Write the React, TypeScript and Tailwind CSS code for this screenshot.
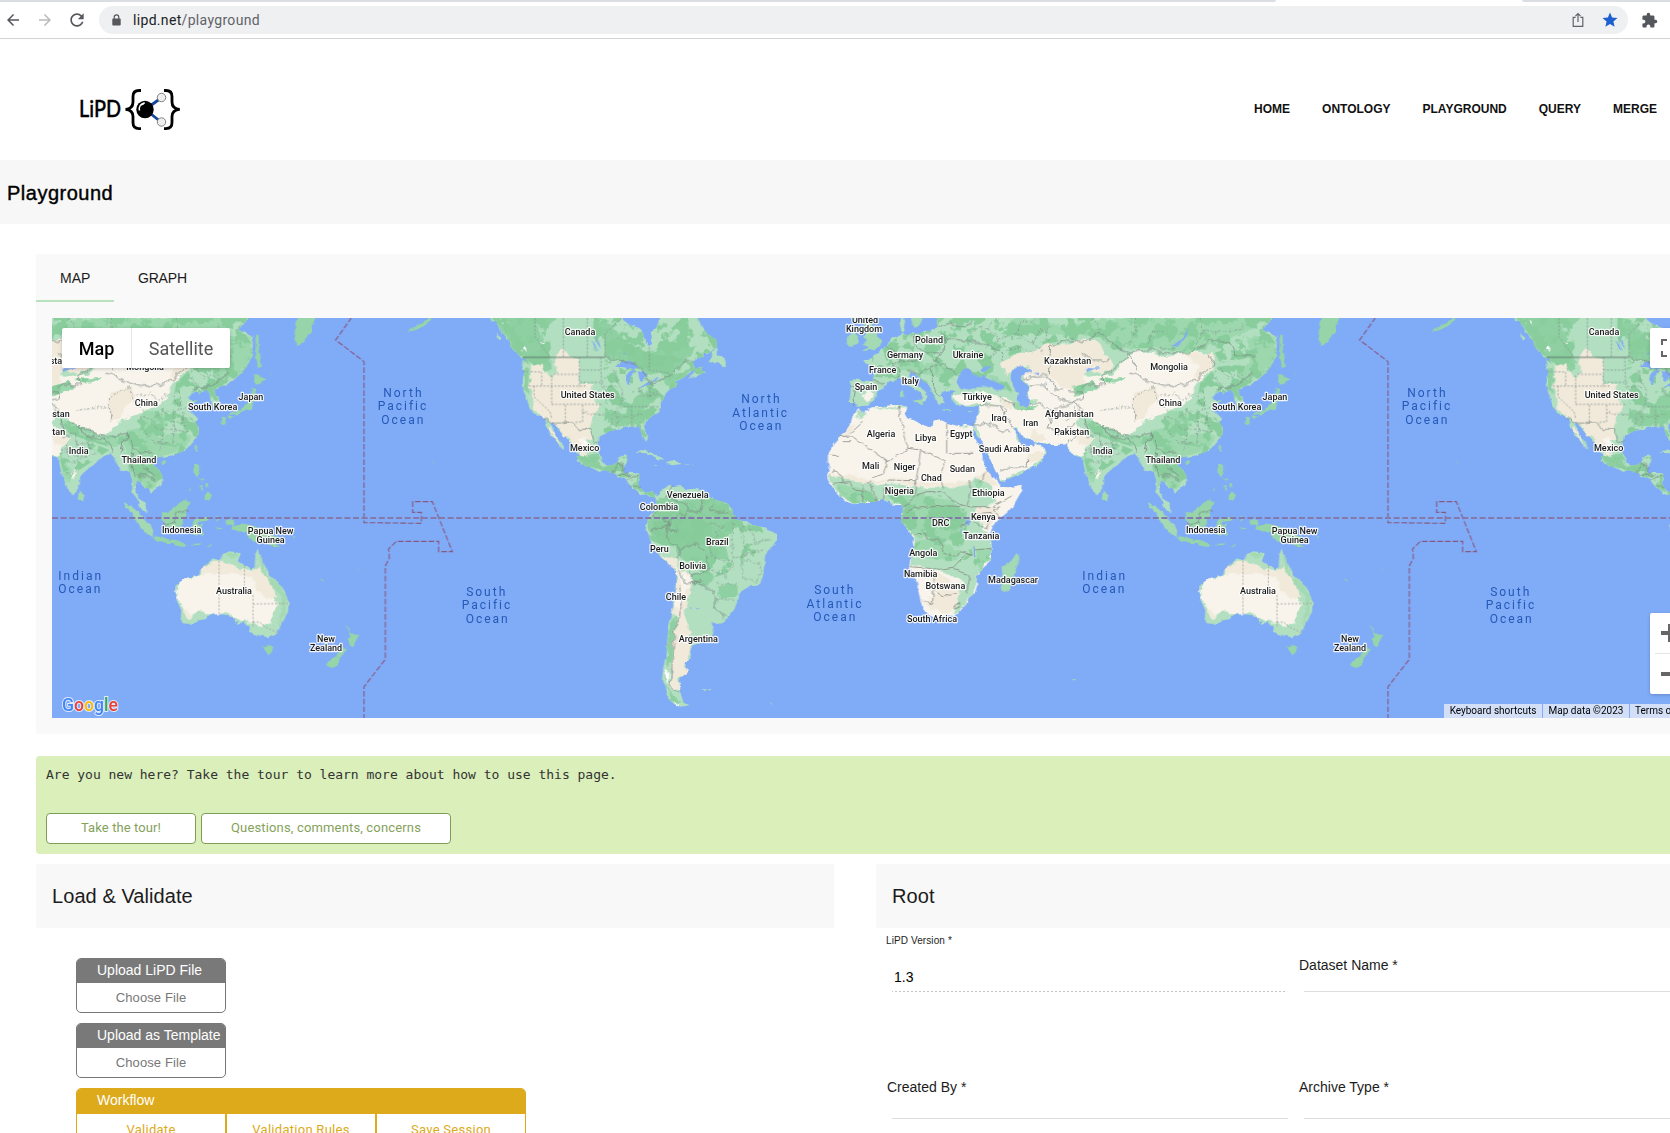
import React from "react";

const WORLD = 1024;

const ASIA = 1050;
const AMERICA = -1050;

const EURASIA =
  "M410 0 L412 30 408 52 395 62 372 66 350 72 335 70 320 77 310 70 303 62 300 45 303 28 312 24 316 36 312 50 314 62 300 75 285 80 268 90 262 108 245 118 235 130 222 134 216 142 205 150 190 150 196 160 212 165 219 180 222 198 215 214 185 211 160 208 149 214 153 230 150 258 148 278 165 280 172 291 185 288 205 287 216 276 228 258 232 246 248 236 256 224 262 216 278 217 290 208 300 202 318 212 326 224 340 236 352 242 362 250 368 262 366 278 374 272 382 262 376 252 380 246 362 234 350 224 340 210 328 200 330 188 345 188 352 198 366 210 385 222 392 236 398 248 404 262 410 280 420 286 424 276 434 278 428 264 420 256 432 244 455 240 466 244 455 254 458 272 470 286 486 284 500 290 520 290 538 285 536 302 530 325 524 345 522 360 530 380 545 398 552 420 566 440 576 470 590 490 598 514 618 510 640 500 670 490 684 474 704 470 722 455 738 428 730 414 712 404 706 398 700 410 680 412 664 406 656 388 646 370 640 354 650 352 664 374 680 388 696 386 712 396 740 402 770 402 800 400 808 414 822 436 838 440 848 442 850 460 856 490 870 525 888 554 902 546 912 522 912 500 930 480 954 464 974 444 990 436 1004 432 1012 440 1020 460 1034 484 1052 482 1062 486 1068 510 1070 530 1066 545 1080 562 1088 575 1094 595 1112 612 1112 594 1104 576 1088 566 1080 550 1078 530 1082 508 1096 518 1106 532 1118 534 1124 548 1145 532 1160 518 1158 494 1146 478 1130 464 1136 446 1150 438 1172 440 1200 432 1220 424 1240 410 1256 390 1268 368 1266 350 1258 336 1264 328 1250 310 1236 296 1240 282 1266 272 1246 270 1234 262 1246 252 1260 244 1272 250 1290 240 1302 250 1302 266 1308 282 1312 296 1328 290 1330 272 1318 254 1314 240 1330 230 1352 224 1372 208 1392 194 1410 172 1422 150 1430 112 1430 84 1415 70 1398 66 1386 58 1402 44 1416 24 1424 0 Z";

const AFRICA =
  "M175 298 L192 306 215 292 245 290 270 286 300 285 320 290 322 304 314 312 322 325 345 332 362 342 388 352 400 346 402 332 418 328 440 338 465 346 482 350 498 344 524 350 520 375 532 396 548 430 548 448 560 480 580 500 598 518 602 530 630 532 665 524 662 548 644 580 626 604 602 624 580 645 570 672 574 700 574 730 574 752 545 778 526 800 532 825 526 845 506 860 500 880 480 904 462 918 440 916 405 924 385 914 366 888 356 850 350 815 335 785 328 768 332 740 344 712 338 680 322 655 306 635 308 608 312 592 296 586 278 584 266 570 245 568 225 576 195 576 162 583 140 575 116 554 98 532 84 510 82 494 90 480 84 455 84 436 100 400 118 380 140 364 152 338 158 318 Z";

const AMERICAS =
  "M110 0 L124 30 145 40 150 62 162 76 180 98 188 118 210 138 218 148 216 168 224 186 218 210 220 242 230 265 236 285 250 310 272 318 285 328 290 348 300 360 300 376 318 388 330 408 340 420 344 414 332 394 316 374 302 346 304 336 318 346 334 370 350 384 374 410 386 438 380 454 410 468 430 476 448 486 464 480 482 486 500 498 528 508 540 528 562 546 576 556 590 552 602 560 614 560 620 574 620 594 610 610 596 618 590 642 586 660 600 686 616 716 632 742 658 762 680 780 680 808 678 840 670 880 666 910 656 950 652 990 650 1030 640 1072 636 1108 648 1130 650 1150 660 1172 688 1190 718 1186 700 1174 688 1150 690 1136 686 1110 698 1098 715 1080 702 1068 704 1056 722 1044 720 1022 728 1006 750 1000 788 976 792 956 784 936 802 942 820 938 838 918 852 900 864 870 870 846 905 826 930 822 938 800 942 770 946 735 964 715 980 694 980 672 940 652 902 644 886 634 862 630 846 612 848 600 836 582 804 572 776 560 756 540 736 536 712 538 690 528 665 532 662 522 640 534 628 546 622 560 606 544 590 548 570 534 564 518 568 494 548 488 520 490 520 470 530 458 534 436 512 438 502 456 486 466 468 466 454 448 444 420 448 386 450 378 478 364 508 358 520 350 548 350 568 348 576 372 590 400 594 380 582 350 588 334 606 318 628 306 632 284 648 250 660 238 676 230 678 212 704 200 722 186 742 178 728 192 714 206 740 198 766 186 752 180 758 170 736 176 728 160 738 146 762 140 758 128 780 130 800 112 800 90 776 74 756 52 744 24 744 0 626 0 626 30 620 52 604 66 606 100 598 112 584 88 576 64 568 54 540 46 520 30 500 0 Z";

const AUSTRALIA =
  "M395 715 L402 740 412 762 424 774 430 798 452 812 470 832 476 848 488 876 486 906 470 934 460 956 455 970 436 976 426 982 408 978 386 976 372 968 370 948 356 946 358 932 346 942 332 944 338 932 326 938 322 926 304 916 270 910 252 914 240 926 214 932 190 942 170 940 164 928 166 902 152 870 154 858 146 842 148 828 164 814 218 796 224 776 246 758 264 745 276 752 286 744 290 732 314 724 344 730 336 752 356 766 376 780 386 770 388 735 Z";

const ISLANDS_WEST =
  "M188 124 L204 112 190 104 200 90 190 78 198 60 192 40 198 20 216 20 214 40 224 56 234 80 244 92 240 108 222 118 Z M146 76 L160 66 174 78 172 102 148 110 140 98 Z M332 10 L336 40 344 54 352 52 362 40 370 20 370 10 Z M338 272 L366 268 370 286 350 280 Z M300 238 L309 240 309 262 300 262 Z M428 297 L452 300 450 304 430 302 Z M506 304 L520 302 512 308 Z M650 728 L658 744 652 766 640 800 628 842 612 850 602 836 604 810 610 790 604 772 632 756 Z M912 540 L926 560 920 574 908 568 Z M1040 576 L1062 586 1084 604 1108 632 1132 656 1130 684 1112 674 1084 640 1066 608 Z M816 1106 L828 1108 820 1112 Z";

const ISLANDS_EAST =
  "M82 680 L108 680 124 688 150 690 180 702 172 708 120 698 86 690 Z M108 604 L120 608 136 600 158 582 178 566 192 580 182 592 182 612 172 630 164 652 140 656 116 646 108 622 Z M198 650 L206 628 240 622 256 618 244 632 214 636 216 644 232 640 224 654 234 672 226 676 214 660 210 680 200 676 Z M196 702 L226 700 220 705 200 706 Z M236 710 L262 700 250 708 Z M270 618 L278 622 272 634 Z M266 652 L290 655 276 658 Z M298 632 L312 627 324 634 326 648 352 640 390 650 425 662 452 680 462 696 448 700 464 712 432 706 408 690 392 698 372 690 360 668 334 662 316 656 320 644 302 644 Z M480 672 L504 662 498 672 Z M500 676 L508 680 504 684 Z M206 466 L218 462 220 480 212 498 222 506 206 498 202 482 Z M222 506 L232 510 228 516 Z M222 528 L230 524 228 542 222 540 Z M238 520 L246 520 246 534 240 532 Z M236 556 L250 544 256 560 250 572 236 566 Z M190 542 L200 528 194 544 Z M206 408 L214 404 212 424 206 426 Z M104 454 L120 450 118 464 108 464 Z M386 192 L392 190 404 202 418 208 402 222 390 224 384 214 Z M380 232 L388 240 390 262 380 282 378 300 358 300 340 312 330 318 322 312 304 318 318 306 344 300 354 290 368 276 376 256 Z M304 318 L322 318 310 326 Z M286 320 L300 322 298 342 288 340 Z M388 72 L398 76 398 110 404 140 402 160 408 168 396 174 390 140 Z M516 0 L516 22 508 40 506 70 512 112 530 100 540 84 558 66 558 44 570 22 570 0 Z M842 66 L866 50 890 36 916 20 916 28 900 44 870 60 Z M412 1008 L430 1006 442 1010 438 1026 428 1036 418 1026 Z M658 942 L668 954 674 968 688 974 700 974 692 988 684 1004 676 1012 668 1006 670 994 664 986 674 980 668 962 Z M656 1010 L664 1016 648 1036 638 1052 634 1068 616 1074 600 1066 606 1052 628 1040 648 1018 Z M580 802 L598 816 588 812 Z M920 452 L926 454 922 457 Z M694 778 L700 780 696 782 Z M436 190 L442 190 438 194 Z";

const ISLANDS_AMERICA =
  "M556 428 L576 420 604 428 620 438 642 446 620 450 610 438 588 430 Z M648 462 L656 452 676 452 692 462 668 466 Z M612 464 L624 466 614 468 Z M706 463 L716 464 706 467 Z M726 464 L730 466 726 467 Z M776 160 L784 136 798 110 802 116 800 134 820 142 828 160 822 170 804 160 Z M758 1138 L772 1138 762 1144 Z M774 1138 L784 1136 778 1142 Z M956 1174 L970 1184 964 1182 Z M140 66 L154 86 146 92 Z";

/* Dry and semi-arid ground */
const CREAM_EURASIA =
  "M524 345 L530 322 540 290 560 285 600 280 615 262 640 275 660 290 690 290 712 270 690 272 682 248 690 228 666 208 664 196 690 184 730 196 800 180 860 200 905 196 940 190 960 170 985 140 1010 122 1060 130 1100 140 1150 130 1160 124 1220 128 1240 150 1240 180 1215 200 1190 215 1180 250 1160 275 1150 290 1110 296 1080 312 1040 330 1010 356 985 376 950 372 905 350 880 330 850 300 835 310 830 340 850 365 880 385 865 410 850 440 825 440 800 402 740 402 712 396 680 388 660 372 650 352 640 354 660 398 700 412 708 396 740 428 700 472 598 514 545 395 Z M458 262 L500 252 560 248 600 262 600 280 540 282 500 284 470 276 Z M190 248 L222 246 218 268 200 276 188 262 Z M880 488 L896 474 902 488 890 508 Z";

const BEIGE_EURASIA =
  "M605 160 L640 135 700 125 740 100 780 108 850 85 900 100 925 140 940 160 930 180 900 190 870 180 850 200 860 220 820 240 790 236 745 195 700 196 666 190 690 184 684 172 655 168 632 186 620 200 Z M700 355 L740 385 712 396 690 384 Z M830 370 L880 385 865 408 835 400 Z M1000 250 L1060 230 1080 262 1040 300 1030 330 1000 320 Z M1150 130 L1240 130 1240 180 1180 215 1200 170 Z M600 262 L640 275 636 300 610 290 Z M685 430 L738 425 718 455 680 460 Z";

const BEIGE_AFRICA =
  "M84 495 L150 490 180 505 230 512 300 506 350 515 430 520 500 515 540 496 560 478 600 530 560 520 520 500 505 524 440 534 400 526 340 532 300 514 200 522 120 500 Z M526 590 L600 590 580 640 560 655 530 620 Z M355 770 L420 790 460 820 480 850 470 890 440 912 400 900 370 880 420 850 400 810 Z M140 350 L170 340 150 370 125 382 Z";

const GREEN_AFRICA =
  "M82 500 L130 500 200 520 240 524 300 520 345 535 400 530 450 535 480 520 515 516 530 500 560 502 580 540 585 575 560 588 525 590 530 615 555 660 572 670 576 720 574 755 530 800 530 840 505 865 485 900 455 912 470 870 455 850 490 815 460 800 420 780 330 768 344 712 338 680 306 635 310 592 278 584 266 570 225 576 162 583 116 554 Z M170 300 L200 306 190 325 168 322 Z M215 292 L320 286 320 294 245 296 Z M480 350 L505 344 500 354 Z";

const DARK_AFRICA =
  "M110 520 L180 535 210 545 225 575 160 582 120 558 Z M270 560 L340 545 380 556 460 575 490 600 500 640 480 680 430 690 380 680 340 680 306 635 310 592 Z M345 690 L420 690 480 720 470 750 400 745 345 735 Z M530 720 L574 715 572 750 540 780 525 760 Z M530 505 L548 510 540 560 528 560 Z";

const DEEP_AFRICA =
  "M390 588 L450 586 488 605 480 650 440 665 380 640 Z M308 600 L345 605 350 640 320 650 306 635 Z";

const DARK_EURASIA =
  "M640 24 L720 24 800 60 830 40 900 30 960 24 1100 24 1200 24 1380 24 1360 60 1300 80 1260 95 1210 110 1170 130 1100 120 1040 110 990 115 940 120 900 80 820 70 760 75 700 60 640 55 Z M1340 80 L1425 80 1428 140 1390 190 1330 215 1310 190 1350 150 Z M1060 360 L1110 350 1140 380 1200 370 1250 380 1220 420 1150 440 1140 470 1155 500 1120 540 1090 510 1070 540 1062 486 1050 420 1040 390 Z M870 330 L920 350 980 380 1040 376 1050 400 1000 410 930 390 880 370 850 330 Z M1100 300 L1160 310 1170 340 1130 370 1090 340 Z M300 150 L350 140 370 165 420 150 455 180 450 205 400 200 350 180 300 180 Z M560 190 L620 215 640 245 600 240 Z M640 275 L690 292 715 285 700 300 650 300 Z M850 440 L870 445 885 500 870 520 Z M820 230 L880 215 900 230 860 245 825 262 Z M900 205 L980 205 960 218 905 216 Z M370 220 L400 250 410 280 400 260 Z";

const DARK_AMERICA =
  "M110 0 L250 0 270 60 290 120 310 180 280 190 270 150 215 140 160 75 Z M250 0 L340 0 300 40 280 70 Z M430 50 L470 30 500 60 530 100 600 125 680 115 740 105 720 140 690 175 640 195 590 190 540 165 500 150 465 140 460 90 Z M220 180 L236 170 240 210 232 250 222 240 Z M640 195 L740 178 680 230 650 230 Z M560 260 L610 235 620 260 580 300 545 320 530 300 Z M470 300 L560 310 600 300 580 340 500 350 470 340 Z M600 625 L630 560 690 570 770 560 835 582 850 612 870 640 830 680 830 740 770 755 700 750 670 710 620 690 590 650 Z M655 950 L680 910 670 990 665 1050 648 1070 Z M720 800 L770 780 790 800 770 830 730 820 Z M380 440 L440 430 460 480 400 465 Z M640 1090 L660 1150 700 1180 660 1172 Z M800 830 L860 820 860 860 810 870 Z";

const DEEP_AMERICA =
  "M610 640 L700 610 780 640 790 680 740 700 680 715 620 690 Z M500 80 L580 125 670 140 700 140 640 185 580 170 520 130 Z";

const BEIGE_AMERICA =
  "M244 160 L270 150 285 185 300 200 325 185 310 150 340 115 360 140 390 145 388 220 430 218 428 250 445 290 430 320 420 350 415 360 430 385 400 395 415 435 400 440 375 410 350 384 318 345 285 328 250 300 250 270 240 230 Z M302 346 L340 418 318 388 298 366 Z M630 735 L680 745 688 778 725 792 722 850 700 900 718 940 722 1040 702 1066 715 1080 686 1110 688 1138 662 1135 664 1060 672 980 684 930 668 905 680 840 680 780 650 762 Z M586 655 L610 700 600 690 Z";

const CREAM_AMERICA = "M684 782 L722 794 718 830 700 860 690 830 Z M385 385 L410 385 415 425 400 420 Z M676 840 L690 860 686 900 674 890 Z";

const CREAM_AUSTRALIA =
  "M146 840 L150 828 164 814 218 796 228 776 262 758 300 760 330 770 378 785 400 800 425 810 436 840 440 870 460 880 440 905 440 935 400 950 372 938 346 934 322 922 290 910 240 912 226 900 200 912 196 928 178 905 166 884 152 866 Z";

const BEIGE_AUSTRALIA =
  "M225 775 L268 752 320 765 378 788 400 770 425 790 440 820 450 860 432 870 400 845 378 800 320 790 270 790 228 800 Z M170 890 L200 920 190 930 168 905 Z";

const GREEN_AUSTRALIA_DARK = "M398 730 L412 765 428 800 460 820 484 870 480 910 455 940 470 890 455 850 425 810 404 770 Z M300 728 L340 732 320 745 Z";

const SEAS =
  "M468 222 L478 192 490 178 502 174 514 182 516 194 534 200 552 196 560 206 590 216 612 228 614 238 592 240 560 230 530 232 504 240 484 238 Z M536 182 L556 170 574 168 562 182 546 186 Z M634 186 L650 170 668 168 686 176 696 188 674 190 662 200 668 214 684 226 690 236 680 242 684 262 690 284 680 292 660 288 650 268 654 250 640 230 632 206 Z M856 180 L870 172 898 172 900 176 872 178 862 186 Z M1112 106 L1130 98 1150 84 1158 60 1162 52 1162 70 1152 92 1130 108 Z M496 632 L512 628 508 646 496 644 Z M520 706 L526 715 526 745 522 744 Z M480 648 L484 670 480 664 Z M704 184 L716 188 718 196 708 192 Z M738 214 L742 224 736 220 Z";

const LAKES_AMERICA =
  "M496 170 L512 156 540 152 566 168 546 176 520 172 Z M528 196 L544 182 558 180 544 198 540 224 532 228 Z M562 184 L582 186 592 196 578 214 570 208 Z M566 234 L590 220 604 218 586 230 Z M604 212 L628 204 626 210 606 216 Z M424 90 L440 108 446 124 436 116 Z M434 78 L448 100 454 118 444 104 Z M214 146 L228 146 226 154 Z M716 895 L724 892 722 898 Z M738 893 L746 895 740 899 Z M518 130 L526 128 524 134 Z";

const RED_SEA = "M522 352 L530 378 548 398 566 438 580 470 598 508 600 524 580 500 560 480 552 450 546 430 534 398 520 376 Z";

const SNOW_AMERICA =
  "M150 26 L166 34 172 46 160 42 Z M200 104 L224 112 230 122 212 120 Z M272 94 L284 100 280 110 Z M648 1076 L658 1080 658 1104 650 1124 646 1100 Z M668 1176 L686 1182 690 1192 676 1188 Z M396 390 L408 396 400 400 Z M696 796 L706 800 700 804 Z M900 642 L908 648 902 650 Z";

const BORDERS_EURASIA =
  "M340 72 L342 100 355 120 385 128 425 128 M425 70 L440 100 430 125 400 150 420 155 M262 108 L290 130 300 150 280 165 300 180 290 208 M300 150 L340 155 365 140 M320 180 L360 190 390 170 430 160 470 195 M390 175 L400 200 400 235 420 256 M410 50 L450 40 480 52 520 40 M430 85 L480 90 560 105 600 120 610 150 M155 230 L168 235 162 262 165 282 M215 214 L256 222 M540 285 L600 288 620 300 600 330 560 340 535 345 M570 340 L600 360 630 368 M600 290 L640 355 M602 262 L620 275 650 282 M690 284 L720 278 752 300 750 330 742 350 770 372 M520 345 L550 335 575 352 M690 228 L730 225 780 270 810 275 M664 206 L700 200 740 196 770 236 790 240 M745 194 L752 110 800 90 850 95 900 70 940 105 985 130 1010 180 M810 245 L850 250 845 270 810 275 M840 240 L860 222 915 226 905 196 950 170 985 140 M752 300 L790 290 820 275 835 290 850 300 M800 330 L820 320 826 290 M770 372 L785 375 806 350 826 340 M805 402 L820 385 860 365 855 320 838 300 M890 335 L920 355 985 380 1040 376 1058 370 M920 355 L925 372 990 390 M985 385 L1000 400 1010 430 M1058 370 L1040 400 1035 430 M1058 372 L1070 410 1090 430 1130 428 M1070 420 L1065 460 1078 500 M1090 430 L1100 470 1140 495 M1085 495 L1120 500 1140 510 M985 130 L1040 118 1100 128 1170 130 1230 90 1290 100 1310 135 1370 140 M990 185 L1050 215 1125 232 1180 215 1245 165 1220 130 M600 480 L640 472 680 470 684 450 M1254 244 L1290 232 1320 215 1360 190 M848 130 L880 150 930 150";

const BORDERS_AFRICA =
  "M300 287 L296 320 312 350 312 380 325 415 262 455 152 376 M125 395 L150 395 M118 380 L150 378 M84 436 L116 436 M188 336 L150 372 M262 455 L250 490 215 505 200 520 M325 415 L362 420 435 452 M440 340 L440 430 520 430 M362 420 L352 490 345 520 M435 452 L420 500 430 535 M262 510 L345 512 350 535 340 565 310 592 M258 520 L250 570 M210 520 L232 575 M190 525 L188 575 M85 500 L100 482 125 495 130 520 M98 520 L150 515 160 540 200 545 M350 555 L380 545 430 545 460 575 500 590 580 590 640 555 M318 605 L345 595 400 590 450 588 500 590 M500 590 L515 540 510 510 M560 480 L540 520 M515 615 L575 610 560 655 M480 650 L515 630 560 658 M342 675 L378 672 380 690 420 690 430 730 470 740 480 725 520 735 M330 770 L420 778 460 772 500 730 520 740 M400 778 L405 840 M365 870 L398 882 400 840 430 860 470 850 M460 775 L510 800 500 850 M526 720 L574 715 M600 590 L580 600 602 624 M465 885 L478 878 478 892 466 896 Z";

const BORDERS_AMERICA =
  "M465 142 L510 152 560 160 580 180 600 220 640 205 665 190 700 155 725 155 M282 328 L320 342 370 338 388 362 420 360 432 388 448 396 M500 466 L522 464 520 488 M482 484 L505 470 M500 496 L545 494 M530 508 L566 494 M545 528 L570 536 M620 600 L600 615 632 625 M668 530 L650 560 690 575 720 600 700 620 690 605 655 640 648 655 682 660 M760 565 L752 600 720 605 M790 575 L780 605 835 605 M648 655 L655 690 690 720 M690 720 L740 700 765 720 M680 745 L690 720 M765 740 L780 775 720 800 M690 780 L700 820 735 815 790 845 M720 820 L760 815 M785 845 L800 865 790 890 825 920 M690 830 L690 900 675 960 668 1040 662 1130 690 1148 M720 780 L725 800 M630 625 L660 640 605 665";

/* Straight survey lines between provinces and states */
const GRID_AMERICA =
  "M255 24 L255 80 300 142 M340 24 L340 142 M412 24 L412 142 M466 142 L466 70 515 24 M598 112 L598 180 660 190 M220 184 L270 186 M236 228 L410 228 M275 186 L275 228 M252 228 L252 260 300 305 305 325 M305 196 L305 285 M310 193 L388 193 M388 142 L388 232 M388 180 L450 180 M390 217 L460 217 M452 142 L455 230 470 245 M305 283 L460 283 M346 285 L346 340 M398 285 L398 335 370 338 M520 290 L625 290 M545 300 L545 350 M600 232 L600 265";

const PROVINCES_AMERICA =
  "M398 305 L470 312 M455 232 L500 232 M490 180 L505 220 520 260 500 300 480 350 M460 250 L510 260 M520 320 L575 310 M560 230 L580 260 630 250 M500 350 L500 310 M850 640 L845 760 M880 650 L885 740 M850 740 L940 720 M875 760 L880 800 920 820 935 770 900 750 Z M780 700 L785 740 850 760 830 800 780 780 M800 820 L860 825 M800 870 L860 870 M900 660 L920 700 960 690 M780 640 L820 650 M820 650 L790 690";

const PROVINCES_EURASIA =
  "M520 60 L560 50 600 90 650 70 700 100 730 130 M560 50 L600 24 M600 90 L590 130 550 150 M650 70 L660 40 700 30 M700 100 L720 60 760 50 M740 60 L745 90 M620 120 L660 110 700 130 M900 60 L880 24 M960 120 L1000 80 1010 24 M1040 100 L1060 60 1100 70 M1080 115 L1120 110 M1200 24 L1210 60 1240 70 1290 60 1330 50 M1210 60 L1190 100 M900 300 L1000 292 1000 260 1060 230 M1000 292 L1010 330 M1080 260 L1120 250 1150 270 1180 250 M1060 240 L1070 270 1100 300 M1090 320 L1130 330 1160 300 1190 310 1230 290 M1130 330 L1140 360 1190 355 1240 365 M1190 310 L1195 355 1190 400 M1160 370 L1150 420 M1220 310 L1225 350 M1110 370 L1140 400 1180 395 M1190 260 L1210 290 1210 240 M1260 180 L1290 200 1330 195 M1240 200 L1270 225 M860 380 L900 370 900 400 950 400 M860 420 L910 440 960 430 M880 460 L930 440 M870 490 L900 480 M940 390 L940 430 M870 400 L880 440 M900 400 L930 430";

const PROVINCES_AUSTRALIA = "M279 752 L279 910 M355 768 L355 828 M381 855 L381 950 M381 882 L488 880 M381 936 L400 936 420 952 455 968";

const DATE_LINE =
  "M677 22 L629 90 714 155 714 638 886 640 886 607 860 607 860 575 919 575 979 725 938 725 938 694 811 694 788 716 790 745 778 768 778 1048 714 1130 714 1230";

type Label = [string, number, number];

const COUNTRIES: Label[] = [
  ["United", 195, 31], ["Kingdom", 192, 58], ["Poland", 387, 90], ["Germany", 315, 136], ["Ukraine", 504, 136],
  ["France", 248, 181], ["Italy", 331, 214], ["Spain", 198, 232], ["Türkiye", 531, 262], ["Kazakhstan", 803, 153],
  ["Mongolia", 1107, 172], ["China", 1111, 280], ["Afghanistan", 808, 313], ["Iraq", 597, 325], ["Iran", 692, 340],
  ["Pakistan", 815, 367], ["India", 908, 424], ["Thailand", 1089, 451], ["Saudi Arabia", 613, 418], ["Egypt", 484, 373],
  ["Libya", 377, 385], ["Algeria", 243, 373], ["Mali", 212, 468], ["Niger", 314, 471], ["Chad", 394, 505],
  ["Sudan", 487, 478], ["Nigeria", 298, 544], ["Ethiopia", 565, 550], ["DRC", 422, 640], ["Kenya", 550, 622],
  ["Tanzania", 544, 679], ["Angola", 370, 730], ["Namibia", 362, 793], ["Botswana", 436, 829], ["Madagascar", 639, 811],
  ["South Africa", 396, 928],
  ["Japan", 375 + ASIA, 262], ["South Korea", 260 + ASIA, 292], ["Indonesia", 167 + ASIA, 661], ["Papua New", 434 + ASIA, 664],
  ["Guinea", 434 + ASIA, 691], ["Australia", 324 + ASIA, 844], ["New", 600 + ASIA, 988], ["Zealand", 600 + ASIA, 1015],
  ["Canada", 390 + AMERICA, 67], ["United States", 413 + AMERICA, 256], ["Mexico", 404 + AMERICA, 415],
  ["Venezuela", 713 + AMERICA, 556], ["Colombia", 627 + AMERICA, 592], ["Peru", 628 + AMERICA, 718],
  ["Brazil", 802 + AMERICA, 697], ["Bolivia", 728 + AMERICA, 769], ["Chile", 678 + AMERICA, 862], ["Argentina", 745 + AMERICA, 988],
];

const OCEANS: Label[] = [
  ["North", 932 + AMERICA, 268], ["Atlantic", 930 + AMERICA, 310], ["Ocean", 932 + AMERICA, 349],
  ["South", 108 + AMERICA, 847], ["Pacific", 109 + AMERICA, 886], ["Ocean", 111 + AMERICA, 928],
  ["South", 102, 841], ["Atlantic", 103, 883], ["Ocean", 104, 922],
  ["Indian", 912, 799], ["Ocean", 911, 838],
  ["North", 830 + ASIA, 250], ["Pacific", 829 + ASIA, 289], ["Ocean", 830 + ASIA, 331],
];

const OFFSETS = [-WORLD, 0, WORLD];

function World() {
  return (
    <g id="world">
      <g filter="url(#coast)">
        <g fill="#b1dfc0">
          <path d={EURASIA} />
          <path d={AFRICA} fill="#f8f4ec" />
          <path d={ISLANDS_WEST} fill="#a3d9b3" />
          <g transform="translate(1050 0)">
            <path d={AUSTRALIA} />
            <path d={ISLANDS_EAST} fill="#97d4a9" />
          </g>
          <g transform="translate(-1050 0)">
            <path d={AMERICAS} />
            <path d={ISLANDS_AMERICA} />
          </g>
        </g>
      </g>
      <g filter="url(#ground)">
        <path d={CREAM_EURASIA} fill="#f8f4ec" clipPath="url(#clipEurasia)" />
        <path d={BEIGE_EURASIA} fill="#f1eadb" clipPath="url(#clipEurasia)" />
        <path d={DARK_EURASIA} fill="#9cd7ad" clipPath="url(#clipEurasia)" />
        <g clipPath="url(#clipAfrica)">
          <path d={GREEN_AFRICA} fill="#b1dfc0" />
          <path d={BEIGE_AFRICA} fill="#f1eadb" />
          <path d={DARK_AFRICA} fill="#9cd7ad" />
          <path d={DEEP_AFRICA} fill="#89cc9c" />
        </g>
        <g transform="translate(-1050 0)">
          <g clipPath="url(#clipAmericas)">
            <path d={DARK_AMERICA} fill="#8fd0a2" />
            <path d={DEEP_AMERICA} fill="#87cb9a" />
            <path d={BEIGE_AMERICA} fill="#f1eadb" />
            <path d={CREAM_AMERICA} fill="#f8f4ec" />
            <path d={SNOW_AMERICA} fill="#ffffff" />
          </g>
        </g>
        <g transform="translate(1050 0)">
          <g clipPath="url(#clipAustralia)">
            <path d={CREAM_AUSTRALIA} fill="#f8f4ec" />
            <path d={BEIGE_AUSTRALIA} fill="#f1eadb" />
            <path d={GREEN_AUSTRALIA_DARK} fill="#a3d9b3" />
          </g>
        </g>
      </g>
      <g filter="url(#mottle)">
        <path d={DARK_EURASIA} clipPath="url(#clipEurasia)" />
        <path d="M410 0 L412 52 300 75 215 142 222 200 290 208 440 240 470 200 600 200 620 140 740 100 900 80 980 115 1100 115 1240 120 1260 160 1420 130 1420 0 Z" clipPath="url(#clipEurasia)" />
        <path d="M1060 340 L1130 310 1190 280 1200 220 1250 170 1430 150 1300 420 1100 540 1040 420 Z M850 430 L950 400 1000 420 880 500 Z" clipPath="url(#clipEurasia)" />
        <path d="M110 530 L200 545 300 545 470 560 500 600 500 680 480 720 570 710 560 780 480 760 345 735 306 635 300 590 160 582 Z" clipPath="url(#clipAfrica)" />
        <g transform="translate(-1050 0)">
          <g clipPath="url(#clipAmericas)">
            <path d="M110 0 L290 0 310 180 280 190 215 150 Z M430 0 L830 0 830 180 600 400 460 380 470 220 430 140 Z M580 530 L980 600 900 760 800 800 720 780 690 730 600 690 Z M380 440 L600 440 600 560 Z" />
          </g>
        </g>
      </g>
      <g filter="url(#coast)" fill="#80abf7">
        <path d={SEAS} />
        <path d={RED_SEA} />
        <path d={LAKES_AMERICA} transform="translate(-1050 0)" />
      </g>
      <g fill="none" stroke="#76827d" strokeWidth="2.3" strokeLinejoin="round" filter="url(#ground)">
        <path d={BORDERS_EURASIA} />
        <path d={BORDERS_AMERICA} transform="translate(-1050 0)" />
        <path d="M112 645 L140 640 155 610 185 600" transform="translate(1050 0)" />
        <g strokeDasharray="7 5" stroke="#83908a">
          <path d={PROVINCES_EURASIA} />
          <path d={PROVINCES_AMERICA} transform="translate(-1050 0)" />
        </g>
      </g>
      <path d={BORDERS_AFRICA} fill="none" stroke="#85877f" strokeWidth="2.3" strokeLinejoin="round" filter="url(#coast)" />
      <g transform="translate(-1050 0)" fill="none" stroke="#83908a" strokeWidth="2.3">
        <path d="M218 142H465" stroke="#5f7469" strokeWidth="2.8" />
        <path d={GRID_AMERICA} strokeDasharray="6 5" />
      </g>
      <path d={PROVINCES_AUSTRALIA} transform="translate(1050 0)" fill="none" stroke="#a3a59f" strokeWidth="2.6" strokeDasharray="6 5" />
      <path d={DATE_LINE} transform="translate(1050 0)" fill="none" stroke="#86587f" strokeWidth="3.3" strokeDasharray="17 6" />
    </g>
  );
}

function WorldMap() {
  return (
    <svg className="block h-[400px] w-[1634px]" viewBox="0 0 1634 400">
      <defs>
        <filter id="coast" x="-1200" y="-10" width="3400" height="1260" filterUnits="userSpaceOnUse" colorInterpolationFilters="sRGB">
          <feTurbulence type="fractalNoise" baseFrequency="0.06" numOctaves="2" seed="4" />
          <feDisplacementMap in="SourceGraphic" scale="11" xChannelSelector="R" yChannelSelector="G" />
        </filter>
        <filter id="ground" x="-1200" y="-10" width="3400" height="1260" filterUnits="userSpaceOnUse" colorInterpolationFilters="sRGB">
          <feTurbulence type="fractalNoise" baseFrequency="0.04" numOctaves="3" seed="9" />
          <feDisplacementMap in="SourceGraphic" scale="22" xChannelSelector="R" yChannelSelector="G" />
        </filter>
        <filter id="mottle" x="-1200" y="-10" width="3400" height="1260" filterUnits="userSpaceOnUse" colorInterpolationFilters="sRGB">
          <feTurbulence type="fractalNoise" baseFrequency="0.024" numOctaves="4" seed="21" />
          <feColorMatrix type="matrix" values="0 0 0 0 0.54  0 0 0 0 0.805  0 0 0 0 0.615  16 0 0 0 -8" />
          <feComposite in2="SourceGraphic" operator="in" />
        </filter>
        <clipPath id="clipEurasia"><path d={EURASIA} /></clipPath>
        <clipPath id="clipAfrica"><path d={AFRICA} /></clipPath>
        <clipPath id="clipAmericas"><path d={AMERICAS} /></clipPath>
        <clipPath id="clipAustralia"><path d={AUSTRALIA} /></clipPath>
      </defs>
      <rect width="1634" height="400" fill="#80abf7" />
      <g transform="translate(748 -8) scale(0.33333)">
        <World />
        <use href="#world" x={-WORLD * 3} />
        <use href="#world" x={WORLD * 3} />
      </g>
      <path d="M0 200H1634" stroke="#8579ab" strokeWidth="1.8" strokeDasharray="6 2.6" />
      <g className="font-['Roboto']" fontSize="9" fontWeight="500" textAnchor="middle" fill="#1b1b1b" stroke="#ffffff" strokeOpacity="0.85" strokeWidth="2.4" strokeLinejoin="round" paintOrder="stroke">
        {OFFSETS.flatMap((dx) =>
          COUNTRIES.map(([name, x, y]) => {
            const px = 748 + x / 3 + dx;
            return px > -22 && px < 1622 ? (
              <text key={name + dx} x={px} y={y / 3 - 8 + 2.8}>{name}</text>
            ) : null;
          }),
        )}
      </g>
      <g className="font-['Roboto']" fontSize="12" letterSpacing="2" textAnchor="middle" fill="#2459b8">
        {OFFSETS.flatMap((dx) =>
          OCEANS.map(([name, x, y]) => {
            const px = 748 + x / 3 + dx;
            return px > 0 && px < 1610 ? (
              <text key={name + x + dx} x={px + 0.7} y={y / 3 - 8 + 3.5}>{name}</text>
            ) : null;
          }),
        )}
      </g>
    </svg>
  );
}

function GoogleMark() {
  return (
    <svg className="absolute bottom-0 left-[8px] h-[30px] w-[64px]" viewBox="0 0 64 30">
      <g className="font-['Roboto']" fontSize="18.5" fontWeight="500" stroke="#ffffff" strokeOpacity="0.75" strokeWidth="2" paintOrder="stroke">
        <text x="2" y="22.500" textLength="56" lengthAdjust="spacingAndGlyphs">
          <tspan fill="#4285f4">G</tspan><tspan fill="#ea4335">o</tspan><tspan fill="#fbbc04">o</tspan><tspan fill="#4285f4">g</tspan><tspan fill="#34a853">l</tspan><tspan fill="#ea4335">e</tspan>
        </text>
      </g>
    </svg>
  );
}

function BrowserBar() {
  return (
    <div className="flex h-[39px] flex-col border-b border-[#d3d3d3] bg-white">
      <div className="flex h-[2px] shrink-0 justify-between">
        <div className="w-[1276px] rounded-br-sm bg-[#dadee2]" />
        <div className="w-[148px] rounded-bl-sm bg-[#dadee2]" />
      </div>
      <div className="flex h-9 items-center">
        <svg className="ml-1 h-[18px] w-[18px]" viewBox="0 0 24 24" fill="#54575b"><path d="M20 11H7.83l5.59-5.59L12 4l-8 8 8 8 1.41-1.41L7.83 13H20v-2z" /></svg>
        <svg className="ml-[14px] h-[18px] w-[18px]" viewBox="0 0 24 24" fill="#b9babc"><path d="m12 4-1.41 1.41L16.17 11H4v2h12.17l-5.58 5.59L12 20l8-8z" /></svg>
        <svg className="ml-[13px] h-5 w-5" viewBox="0 0 24 24" fill="#54575b"><path d="M17.65 6.35C16.2 4.9 14.21 4 12 4c-4.42 0-7.99 3.58-7.99 8s3.57 8 7.99 8c3.73 0 6.84-2.55 7.73-6h-2.08c-.82 2.33-3.04 4-5.65 4-3.31 0-6-2.69-6-6s2.69-6 6-6c1.66 0 3.14.69 4.22 1.78L13 11h7V4l-2.35 2.35z" /></svg>
        <div className="ml-[12px] flex h-7 w-[1529px] items-center rounded-full bg-[#eff0f2]">
          <svg className="ml-[13px] h-[12px] w-[9px]" viewBox="0 0 9 12" fill="#55585c"><rect x="0.3" y="4.4" width="8.4" height="7.2" rx="1" /><path d="M2.2 5V3.2a2.3 2.3 0 0 1 4.6 0V5" fill="none" stroke="#55585c" strokeWidth="1.2" /></svg>
          <p className="ml-[12px] flex-1 font-['Roboto'] text-[14px] leading-7 tracking-[0.32px] text-[#5f6368]"><span className="text-[#202124]">lipd.net</span>/playground</p>
          <svg className="h-4 w-[12px]" viewBox="0 0 12 16" fill="none" stroke="#5f6368" strokeWidth="1.2"><path d="M3.6 5.3H1.2v9h9.6v-9H8.4M6 10V2M3.4 4.2 6 1.6l2.6 2.6" /></svg>
          <svg className="mr-[9px] ml-[17px] h-[18px] w-[18px]" viewBox="0 0 24 24" fill="#1b5fd0"><path d="M12 17.27 18.18 21l-1.64-7.03L22 9.24l-7.19-.61L12 2 9.19 8.63 2 9.24l5.46 4.73L5.82 21z" /></svg>
        </div>
        <svg className="ml-[13px] h-[17px] w-[17px] shrink-0" viewBox="0 0 24 24" fill="#54575b"><path d="M20.5 11H19V7c0-1.1-.9-2-2-2h-4V3.500a2.500 2.500 0 0 0-5 0V5H4c-1.100 0-1.990.9-1.990 2v3.800H3.500c1.490 0 2.700 1.210 2.700 2.700s-1.210 2.700-2.700 2.700H2V20c0 1.100.9 2 2 2h3.800v-1.500c0-1.490 1.210-2.700 2.700-2.700s2.700 1.210 2.700 2.700V22H17c1.100 0 2-.9 2-2v-4h1.500a2.500 2.500 0 0 0 0-5z" /></svg>
      </div>
    </div>
  );
}

function Logo() {
  return (
    <svg className="mt-[2px] ml-[76px] h-[50px] w-[110px]" viewBox="0 0 110 50">
      <text x="3" y="32" className="font-['Lato']" fontSize="23" fontWeight="500" stroke="#000" strokeWidth="0.4" textLength="42" lengthAdjust="spacingAndGlyphs">LiPD</text>
      <g fill="none" stroke="#000" strokeWidth="2.8">
        <path d="M65 5.500h-2c-4.500 0-6 2-6 6v5.500c0 4-1.500 7-7.500 7.300 6 .3 7.500 3.300 7.500 7.300v6c0 4 1.500 6 6 6h2" />
        <path d="M88 5.500h2c4.500 0 6 2 6 6v5.500c0 4 1.500 7 7.800 7.300-6.300.3-7.800 3.300-7.800 7.300v6c0 4-1.500 6-6 6h-2" />
      </g>
      <path d="M70 24 85 13M70 25 85 37" stroke="#14479c" strokeWidth="2.8" />
      <circle cx="69" cy="24.500" r="8.700" fill="#000" />
      <path d="M63.500 25.500c-1-4 1.500-7 5-7.500" fill="none" stroke="#fff" strokeWidth="1.500" />
      <path d="M64.300 20.500c1-1.800 2.500-2.800 4.500-3 0 1.500-1.500 3-4.500 3z" fill="#fff" />
      <g fill="#eeeeee" stroke="#777" strokeWidth="0.9"><circle cx="85.500" cy="12.500" r="4.200" /><circle cx="85.500" cy="37" r="4.200" /></g>
    </svg>
  );
}

function UploadBox({ title }: { title: string }) {
  return (
    <div className="mb-[10px] h-[55px] w-[150px] overflow-hidden rounded-[5px] border border-[#777] bg-white">
      <div className="h-6 bg-[#797979] pl-5 text-[14px] leading-[23px] whitespace-nowrap text-white">{title}</div>
      <div className="text-center text-[13px] leading-[29px] tracking-[0.1px] text-[#777]">Choose File</div>
    </div>
  );
}

function SectionTitle({ children }: { children: React.ReactNode }) {
  return <h2 className="h-16 bg-[#f8f8f8] pl-4 text-[20px] leading-[64px] tracking-[0.07px] text-[#1c1c1c]">{children}</h2>;
}

export default function App() {
  return (
    <div className="h-[1133px] w-[1670px] overflow-hidden bg-white font-['Liberation_Sans',sans-serif] text-[#1c1c1c]">
      <BrowserBar />
      <header className="flex h-[121px] items-center justify-between pt-[19px]">
        <Logo />
        <nav className="mr-[13px] flex gap-8 text-[12px] font-bold text-[#111]">
          <a>HOME</a><a>ONTOLOGY</a><a>PLAYGROUND</a><a>QUERY</a><a>MERGE</a>
        </nav>
      </header>
      <h1 className="h-16 bg-[#f7f7f7] pl-[7px] text-[20px] leading-[66px] tracking-[0.5px] text-black [-webkit-text-stroke:0.4px_#000]">Playground</h1>

      <main className="ml-9 w-[1650px] pt-[30px]">
        <section className="h-[480px] bg-[#f9f9f9]">
          <div className="flex h-12 text-[14px] leading-[48px]">
            <div className="w-[78px] border-b-2 border-[#b7e2bd] pl-6">MAP</div>
            <div className="pl-6 tracking-[-0.2px]">GRAPH</div>
          </div>
          <div className="relative mt-4 ml-4 h-[400px] w-[1634px] overflow-hidden">
            <WorldMap />
            <div className="absolute top-[10px] left-[10px] flex h-10 w-[168px] rounded-[2px] bg-white font-['Roboto'] text-[18px] leading-[41px] shadow-[0_1px_4px_-1px_rgba(0,0,0,0.3)]">
              <div className="w-[70px] border-r border-[#e6e6e6] text-center font-medium text-black">Map</div>
              <div className="flex-1 text-center text-[#565656]">Satellite</div>
            </div>
            <GoogleMark />
            <div className="absolute top-[10px] left-[1598px] h-10 w-10 rounded-[2px] bg-white shadow-[0_1px_4px_-1px_rgba(0,0,0,0.3)]">
              <svg className="mt-[11px] ml-[11px] h-[18px] w-[18px]" viewBox="0 0 18 18" fill="#666"><path d="M0 0v6h2V2h4V0H0zm16 0h-4v2h4v4h2V0h-2zm0 16h-4v2h6v-6h-2v4zM2 12H0v6h6v-2H2v-4z" /></svg>
            </div>
            <div className="absolute top-[295px] left-[1598px] flex h-[81px] w-10 flex-col items-center rounded-[2px] bg-white shadow-[0_1px_4px_-1px_rgba(0,0,0,0.3)]">
              <svg className="my-[11px] h-[18px] w-[18px]" viewBox="0 0 18 18" fill="#666"><path d="M18 7h-7V0H7v7H0v4h7v7h4v-7h7z" /></svg>
              <div className="h-px w-[30px] bg-[#e6e6e6]" />
              <svg className="my-[11px] h-[18px] w-[18px]" viewBox="0 0 18 18" fill="#666"><path d="M0 7h18v4H0z" /></svg>
            </div>
            <div className="absolute bottom-0 left-[1392px] flex h-[14px] gap-px font-['Roboto'] text-[10px] leading-[14px] whitespace-nowrap text-black">
              <div className="w-[98px] bg-[#f5f5f5]/70 text-center">Keyboard shortcuts</div>
              <div className="w-[86px] bg-[#f5f5f5]/70 text-center">Map data ©2023</div>
              <div className="w-[80px] bg-[#f5f5f5]/70 pl-[5px]">Terms of Use</div>
            </div>
          </div>
        </section>

        <section className="mt-[22px] h-[98px] rounded-[4px] bg-[#daefba] pl-[10px]">
          <p className="h-[57px] pt-[9px] font-['DejaVu_Sans_Mono'] text-[13px] leading-5 tracking-[-0.01px] text-[#333]">Are you new here? Take the tour to learn more about how to use this page.</p>
          <div className="flex gap-[5px] font-['Roboto'] text-[13px] text-[#85a25b]">
            <button className="h-[31px] w-[150px] rounded-[4px] border border-[#7f9d56] bg-white pb-px tracking-[0.1px]">Take the tour!</button>
            <button className="h-[31px] w-[250px] rounded-[4px] border border-[#7f9d56] bg-white pb-[2px] tracking-[0.16px]">Questions, comments, concerns</button>
          </div>
        </section>

        <div className="mt-[10px] flex gap-[42px]">
          <section className="w-[798px] shrink-0">
            <SectionTitle>Load &amp; Validate</SectionTitle>
            <div className="pt-[30px] pl-10">
              <UploadBox title="Upload LiPD File" />
              <UploadBox title="Upload as Template" />
              <div className="w-[450px] overflow-hidden rounded-t-[5px] border border-[#ddaa1b]">
                <div className="h-[25px] bg-[#ddaa1b] pl-5 text-[14px] leading-[23px] text-white">Workflow</div>
                <div className="flex h-[35px] divide-x-2 divide-[#ddaa1b] text-center font-['Roboto'] text-[13px] leading-[31px] tracking-[0.28px] text-[#ddaa1b]">
                  <div className="flex-1">Validate</div>
                  <div className="flex-1">Validation Rules</div>
                  <div className="flex-1">Save Session</div>
                </div>
              </div>
            </div>
          </section>

          <section className="w-[820px] shrink-0">
            <SectionTitle>Root</SectionTitle>
            <div className="flex gap-4 pl-4 text-[14px]">
              <div className="w-[396px] shrink-0">
                <div className="h-16 w-[395px] bg-[linear-gradient(90deg,#8a8a8a_1px,transparent_1px)] bg-[length:4px_1px] bg-bottom bg-repeat-x">
                  <label className="-ml-[6px] block h-[26px] text-[10px] leading-[25px] tracking-[0.1px]">LiPD Version *</label>
                  <p className="pt-[9px] pl-[2px] leading-[28px] text-black">1.3</p>
                </div>
                <div className="h-[127px] border-b border-[#dedede] pt-[84px]">
                  <label className="-ml-[5px] block leading-[22px]">Created By *</label>
                </div>
              </div>
              <div className="w-[396px] shrink-0">
                <div className="h-16 border-b border-[#dedede] pt-[26px]">
                  <label className="-ml-[5px] block leading-[22px]">Dataset Name *</label>
                </div>
                <div className="h-[127px] border-b border-[#dedede] pt-[84px]">
                  <label className="-ml-[5px] block leading-[22px]">Archive Type *</label>
                </div>
              </div>
            </div>
          </section>
        </div>
      </main>
    </div>
  );
}
